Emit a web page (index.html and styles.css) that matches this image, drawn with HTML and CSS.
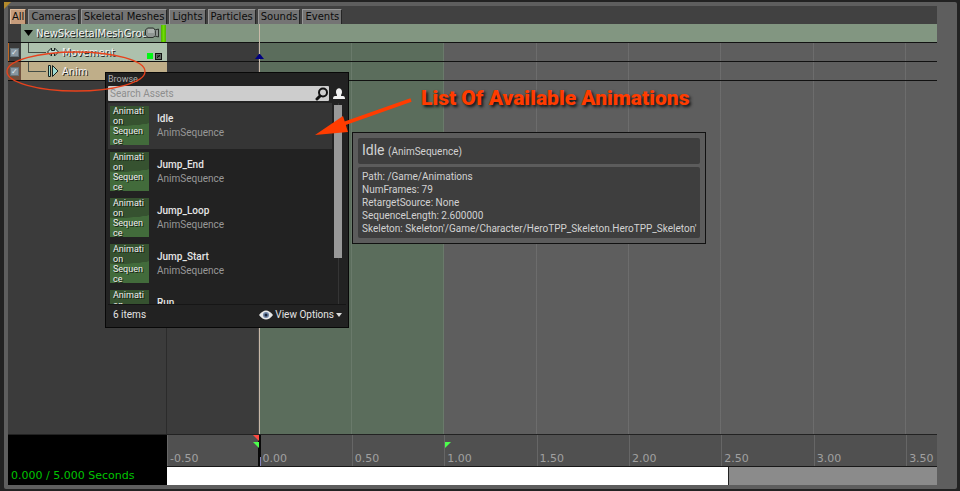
FILE: index.html
```html
<!DOCTYPE html>
<html lang="en">
<head>
<meta charset="utf-8">
<title>Matinee Tracks</title>
<link rel="stylesheet" href="styles.css">
</head>
<body>
<main class="editor">
  <nav class="filters">
    <button class="filter active" type="button">All</button>
    <button class="filter" type="button">Cameras</button>
    <button class="filter" type="button">Skeletal Meshes</button>
    <button class="filter" type="button">Lights</button>
    <button class="filter" type="button">Particles</button>
    <button class="filter" type="button">Sounds</button>
    <button class="filter" type="button">Events</button>
  </nav>

  <section class="tracks">
    <div class="outliner">
      <div class="row group">
        <div class="toggle"></div>
        <div class="label">
          <svg class="fold" width="10" height="7" viewBox="0 0 10 7"><path d="M0 0h9L4.500 6z" fill="#000"/></svg>
          <span class="name">NewSkeletalMeshGrou</span>
          <svg class="camera" width="14" height="12" viewBox="0 0 14 12"><path d="M.500 3l2-2h6l1.500 2 3.500-1v8L10 9l-2 1.500H3L.500 8z" fill="#8f9693" stroke="#2c322d"/><path d="M3 3h6M3 5h6" stroke="#c8cec9"/><path d="M10.500 3.500v5" stroke="#3c423e"/></svg>
          <span class="color-bar"></span>
        </div>
      </div>
      <div class="row movement">
        <div class="toggle"><input type="checkbox" checked aria-label="Enable Movement"></div>
        <div class="label">
          <span class="branch"></span>
          <svg class="kind" width="12" height="12" viewBox="0 0 12 12"><path d="M.500 6L4.500 2v2.500h3V2L11.500 6l-4 4V7.500h-3V10z" fill="#bfe0d8" stroke="#1c2420"/></svg>
          <span class="name">Movement</span>
          <span class="chip"></span>
          <svg class="curve" width="7" height="7" viewBox="0 0 7 7"><rect x=".5" y=".5" width="6" height="6" fill="#626b64" stroke="#111"/><path d="M2 5l3-3M2 3h3" stroke="#111"/></svg>
        </div>
      </div>
      <div class="row anim">
        <div class="toggle"><input type="checkbox" checked aria-label="Enable Anim"></div>
        <div class="label">
          <span class="branch"></span>
          <svg class="kind" width="12" height="12" viewBox="0 0 12 12"><path d="M1.500 .500h2v11h-2zM5.500 .500v11L11 6z" fill="#9edbd2" stroke="#17221f"/></svg>
          <span class="name">Anim</span>
        </div>
      </div>
    </div>
    <div class="timeline">
      <div class="lane header"></div>
      <div class="lane"></div>
      <div class="lane"></div>
      <div class="playhead"><svg class="key" width="9" height="5" viewBox="0 0 9 5"><path d="M0 5l4-5h1l4 5z" fill="#000080"/></svg></div>
    </div>
  </section>

  <footer class="transport">
    <div class="clock">0.000 / 5.000 Seconds</div>
    <div class="scale">
      <div class="ruler">
        <span>-0.50</span><span>0.00</span><span>0.50</span><span>1.00</span><span>1.50</span><span>2.00</span><span>2.50</span><span>3.00</span><span>3.50</span>
        <svg class="start" width="8" height="31" viewBox="0 0 8 31"><path d="M5 0h3v31H5z" fill="#090909"/><path d="M7 22h1v9H7z" fill="#8585bd"/><path d="M0 0h6v6z" fill="#ff4a43"/><path d="M0 7h6v6z" fill="#4cff4c"/></svg>
        <svg class="end" width="7" height="7" viewBox="0 0 7 7"><path d="M0 0h6L0 6z" fill="#4cff4c"/></svg>
      </div>
      <div class="scroller"><div class="range"></div></div>
    </div>
  </footer>

  <svg class="corner" width="7" height="7" viewBox="0 0 7 7"><path d="M0 0h7L0 7z" fill="#b58b2c"/></svg>
</main>

<section class="browser">
  <h2>Browse</h2>
  <div class="search">
    <div class="field">
      <input type="text" aria-label="Search Assets" placeholder="Search Assets">
      <svg width="14" height="14" viewBox="0 0 14 14"><circle cx="8" cy="5.500" r="4" fill="none" stroke="#111" stroke-width="2"/><path d="M5 9l-3 3" stroke="#111" stroke-width="3" stroke-linecap="round"/></svg>
    </div>
    <svg width="12" height="12" viewBox="0 0 12 12"><path d="M3 4c0-5 6-5 6 0 0 2-1 2-1 4h2q2 0 2 3H0q0-3 2-3h2c0-2-1-2-1-4z" fill="#f2f2f2"/></svg>
  </div>
  <div class="results">
    <ul>
      <li class="selected"><span class="thumb">Animati<br>on<br>Sequen<br>ce</span><span class="asset"><b>Idle</b><span>AnimSequence</span></span></li>
      <li><span class="thumb">Animati<br>on<br>Sequen<br>ce</span><span class="asset"><b>Jump_End</b><span>AnimSequence</span></span></li>
      <li><span class="thumb">Animati<br>on<br>Sequen<br>ce</span><span class="asset"><b>Jump_Loop</b><span>AnimSequence</span></span></li>
      <li><span class="thumb">Animati<br>on<br>Sequen<br>ce</span><span class="asset"><b>Jump_Start</b><span>AnimSequence</span></span></li>
      <li><span class="thumb">Animati<br>on</span><span class="asset"><b>Run</b></span></li>
    </ul>
    <div class="bar"><div class="grip"></div></div>
  </div>
  <div class="status">
    <span>6 items</span>
    <button type="button">
      <svg width="14" height="10" viewBox="0 0 14 10"><path d="M0 5q7-9 14 0-7 9-14 0z" fill="#e8e8e8"/><circle cx="7" cy="5" r="3" fill="#7186a8"/><circle cx="7" cy="5" r="1.500" fill="#1c2638"/></svg>
      View Options
      <svg width="6" height="4" viewBox="0 0 6 4"><path d="M0 0h6L3 4z" fill="#ddd"/></svg>
    </button>
  </div>
</section>

<aside class="tooltip">
  <h3>Idle <small>(AnimSequence)</small></h3>
  <div class="details">
    <div>Path: /Game/Animations</div>
    <div>NumFrames: 79</div>
    <div>RetargetSource: None</div>
    <div>SequenceLength: 2.600000</div>
    <div>Skeleton: Skeleton'/Game/Character/HeroTPP_Skeleton.HeroTPP_Skeleton'</div>
  </div>
</aside>

<svg class="markup" width="420" height="150" viewBox="0 0 420 150">
  <ellipse cx="76" cy="71.500" rx="69" ry="19.500" fill="none" stroke="#e8421c" stroke-width="1.300"/>
  <path d="M411 100L343 124" stroke="#ff3c00" stroke-width="3.500"/>
  <path d="M315 135L343 116 348 132z" fill="#ff3c00"/>
</svg>
<p class="callout">List Of Available Animations</p>
</body>
</html>
```
FILE: styles.css
```css
* {
  box-sizing: border-box;
}

body {
  margin: 0;
  min-height: 100vh;
  display: flex;
  position: relative;
  padding: 2px 3px 2px 4px;
  background: #222;
  font-family: "DejaVu Sans", sans-serif;
  font-size: 10px;
}

svg {
  display: block;
  flex: none;
}

button {
  font: inherit;
}

.editor {
  flex: 1;
  display: flex;
  flex-direction: column;
  position: relative;
  padding: 4px 20px 4px 4px;
  background: #5e5e5e;
  border-radius: 2px;
}

.corner {
  position: absolute;
  left: 0;
  top: 0;
}

.filters {
  display: flex;
  gap: 2px;
  height: 18px;
  padding: 3px 2px 0;
  background: #414141;
}

.filter {
  height: 16px;
  padding: 0 2px;
  border: 1px solid;
  border-color: #979797 #252525 #252525 #979797;
  background: #747474;
  color: #0c0c0c;
  font-size: 10px;
  line-height: 12px;
}

.filter.active {
  padding: 0 1px;
  background: #c69c7b;
  border-color: #e0bd9e #4e3828 #4e3828 #e0bd9e;
}

.tracks {
  flex: 1;
  display: flex;
}

.outliner {
  width: 159px;
  background: #3b3b3b;
  border-right: 1px solid #2b2b2b;
}

.row {
  display: flex;
  height: 19px;
  margin-right: -1px;
  border-bottom: 1px solid #111;
}

.toggle {
  width: 13px;
  padding: 5px 0 0 2px;
  background: #3b3b3b;
}

.movement .toggle {
  border-left: 1px solid #c0651f;
  padding-left: 1px;
}

.anim .toggle {
  background: #70503d;
}

.toggle input {
  appearance: none;
  display: block;
  margin: 0;
  width: 9px;
  height: 9px;
  border: 1px solid #65737a;
  background: #8796a0;
}

.toggle input::before {
  content: "✓";
  display: block;
  color: #e4edf2;
  font-size: 8px;
  line-height: 7px;
}

.label {
  flex: 1;
  display: flex;
  align-items: center;
  min-width: 0;
  overflow: hidden;
  color: #f2f2f2;
  text-shadow: 1px 1px 0 #1c1c1c;
}

.group .label {
  background: #839a86;
  padding-left: 3px;
}

.movement .label {
  background: #adc1ad;
}

.anim .label {
  background: #bfae89;
}

.group .name {
  width: 112px;
  margin-left: 2px;
  overflow: hidden;
}

.camera {
  margin-left: -3px;
}

.color-bar {
  width: 5px;
  height: 17px;
  margin: 0 1px 0 auto;
  background: linear-gradient(90deg, #4fae00, #6de000, #4fae00);
}

.branch {
  width: 18px;
  height: 10px;
  margin: -8px 1px 0 7px;
  border-left: 1px solid #444d45;
  border-bottom: 1px solid #444d45;
}

.kind {
  margin-right: 3px;
}

.chip {
  width: 6px;
  height: 6px;
  margin: 8px 2px 0 auto;
  background: #00f715;
}

.curve {
  margin: 8px 5px 0 0;
}

.timeline {
  flex: 1;
  position: relative;
  background:
    repeating-linear-gradient(90deg, transparent 0 1px, transparent 1px calc(12% - 1px), rgba(255, 255, 255, .09) calc(12% - 1px) 12%),
    linear-gradient(90deg, #3b3b3b 12%, #5b6d5c 12% 36%, #5e5e5e 36%);
}

.lane {
  height: 19px;
  border-bottom: 1px solid #111;
}

.lane.header {
  background: #829681;
}

.playhead {
  position: absolute;
  left: 12%;
  top: 0;
  bottom: 0;
  width: 1px;
  background: #c8b9a8;
}

.key {
  position: absolute;
  left: -4px;
  top: 30px;
}

.transport {
  display: flex;
  border-top: 1px solid #222;
}

.clock {
  width: 159px;
  padding: 34px 3px 0;
  background: #000;
  color: #00c400;
  font-size: 11px;
  line-height: 14px;
}

.scale {
  flex: 1;
  min-width: 0;
}

.ruler {
  display: grid;
  grid-template-columns: repeat(8, 12%) 4%;
  position: relative;
  height: 32px;
  background: #505050;
  border-bottom: 1px solid #181818;
}

.ruler span {
  padding: 17px 0 0 2px;
  border-left: 1px solid #666;
  color: #a0a0a0;
  font-size: 11px;
  line-height: 14px;
  white-space: nowrap;
}

.start {
  position: absolute;
  left: 12%;
  top: 0;
  margin-left: -6px;
}

.end {
  position: absolute;
  left: 36%;
  top: 7px;
  margin-left: 1px;
}

.scroller {
  height: 18px;
  background: #8b8b8b;
}

.range {
  width: 73%;
  height: 18px;
  background: #fff;
  border-right: 1px solid #222;
}

.browser {
  position: absolute;
  left: 105px;
  top: 72px;
  width: 244px;
  padding: 0 2px;
  border: 1px solid #080808;
  background: #222;
  color: #e4e4e4;
  font-family: Roboto, sans-serif;
  font-size: 10px;
}

.browser h2 {
  margin: 0;
  color: #b0b0b0;
  font-size: 9px;
  font-weight: 400;
  line-height: 13px;
}

.search {
  display: flex;
  align-items: center;
  gap: 4px;
}

.field {
  flex: 0 0 221px;
  display: flex;
  align-items: center;
  height: 15px;
  border-radius: 1px;
  background: #cdcdcd;
}

.field input {
  flex: 1;
  min-width: 0;
  padding: 0 2px;
  border: 0;
  background: transparent;
  font: inherit;
}

.field input::placeholder {
  color: #8e8e8e;
}

.results {
  display: flex;
  height: 202px;
  margin-top: 2px;
  overflow: hidden;
  border-bottom: 1px solid #161616;
}

.results ul {
  flex: 1;
  margin: 0;
  padding: 0;
  list-style: none;
}

.results li {
  display: flex;
  gap: 8px;
  height: 46px;
  padding: 3px 2px;
}

.results .selected {
  background: #353535;
}

.thumb {
  width: 39px;
  height: 39px;
  padding-left: 3px;
  overflow: hidden;
  background: radial-gradient(ellipse 60px 20px at 10px 0, #365230 98%, #426b3b);
  color: #eee;
  font-size: 9px;
  line-height: 10px;
  text-shadow: 1px 1px 0 #152012;
}

.asset {
  display: flex;
  flex-direction: column;
  padding-top: 6px;
  line-height: 14px;
  color: #989898;
}

.asset b {
  color: #e6e6e6;
  font-weight: 500;
}

.bar {
  width: 14px;
  padding: 2px 4px 0 2px;
  background: linear-gradient(90deg, transparent 6px, #353535 6px 7px, transparent 7px);
}

.grip {
  height: 153px;
  background: #999;
}

.status {
  display: flex;
  align-items: center;
  justify-content: space-between;
  height: 22px;
  padding: 0 4px 3px 5px;
}

.status button {
  display: flex;
  align-items: center;
  gap: 2px;
  padding: 0;
  border: 0;
  background: none;
  color: inherit;
}

.tooltip {
  position: absolute;
  left: 352px;
  top: 132px;
  padding: 5px;
  border: 1px solid #111;
  background: #5c5c5c;
  color: #d2d2d2;
  font-family: Roboto, sans-serif;
  font-size: 10px;
}

.tooltip h3 {
  margin: 0 0 3px;
  padding: 0 4px;
  border-radius: 2px;
  background: #3e3e3e;
  font-size: 14px;
  font-weight: 400;
  line-height: 24px;
}

.tooltip small {
  font-size: 10px;
}

.details {
  padding: 3px 4px;
  border-radius: 2px;
  background: #3e3e3e;
  line-height: 13px;
  white-space: nowrap;
}

.markup {
  position: absolute;
  left: 0;
  top: 0;
  pointer-events: none;
}

.callout {
  position: absolute;
  left: 421px;
  top: 86px;
  margin: 0;
  color: #ff3c00;
  font-family: Roboto, sans-serif;
  font-size: 21px;
  font-weight: 900;
  line-height: 24px;
  text-shadow: 2px 2px 3px #111;
  white-space: nowrap;
}
```
